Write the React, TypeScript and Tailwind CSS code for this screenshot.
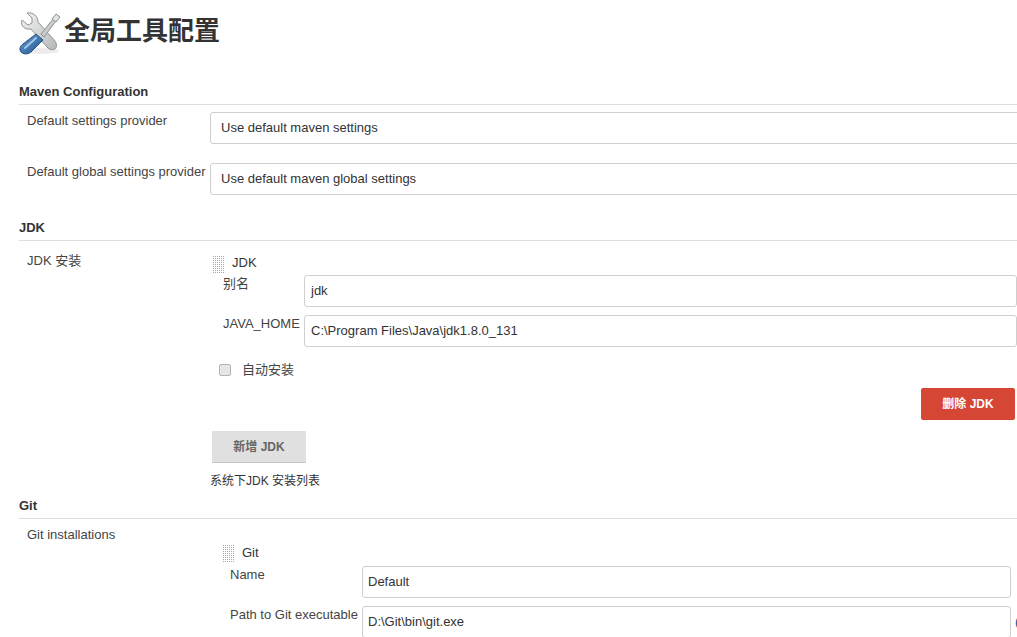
const sans = "font-['Liberation_Sans','Noto_Sans_CJK_SC',sans-serif]"

function ToolsIcon() {
  return (
    <svg width="44" height="44" viewBox="0 0 44 44" className="shrink-0">
      <defs>
        <linearGradient id="steel" x1="0" y1="0" x2="1" y2="1">
          <stop offset="0" stopColor="#f4f5f5" />
          <stop offset="1" stopColor="#b4b7b8" />
        </linearGradient>
        <linearGradient id="handle" x1="0" y1="0" x2="1" y2="1">
          <stop offset="0" stopColor="#6aa0d6" />
          <stop offset="1" stopColor="#1f5391" />
        </linearGradient>
      </defs>
      <ellipse cx="22" cy="40" rx="19" ry="3" fill="#ececec" />
      <path
        d="M4 9 L10 14 L14 12 L14 7 L9 2 C15 1 20 5 20 11 L37 30 C39 33 39 36 37 38 C35 39 32 39 30 37 L13 18 C7 19 2 15 4 9 Z"
        fill="url(#steel)"
        stroke="#8e9294"
        strokeWidth="1"
      />
      <path d="M23 23 L35 8 L38 10 L26 26 Z" fill="#c9cccd" stroke="#8e9294" strokeWidth="1" />
      <path d="M34 8 L38 3 L42 6 L38 11 Z" fill="#e1e3e4" stroke="#8e9294" strokeWidth="1" />
      <path
        d="M18 23 L25 29 L13 41 C9 44 5 43 3 41 C1 38 2 35 5 33 Z"
        fill="url(#handle)"
        stroke="#24507f"
        strokeWidth="1"
      />
      <path d="M7 37 L18 27" stroke="#a3c8ea" strokeWidth="2" strokeLinecap="round" />
    </svg>
  )
}

function DragHandle({ className }: { className: string }) {
  return (
    <svg width="11" height="17" viewBox="0 0 11 17" className={className}>
      <defs>
        <pattern id="dots" width="2" height="2" patternUnits="userSpaceOnUse">
          <rect width="1" height="1" fill="#a8a8a8" />
        </pattern>
      </defs>
      <rect width="11" height="17" fill="url(#dots)" />
    </svg>
  )
}

function Section({ title }: { title: string }) {
  return (
    <div className="border-b border-[#dfdfdf] pb-[5px] text-[13px] leading-[15px] font-bold text-[#333]">{title}</div>
  )
}

function TextBox({ value, className }: { value: string; className: string }) {
  return (
    <div
      className={`flex h-[32px] shrink-0 items-center rounded-[3px] border border-[#cfcfcf] bg-white text-[13px] text-[#333] ${className}`}
    >
      {value}
    </div>
  )
}

export default function App() {
  return (
    <div className={`relative h-[637px] w-[1017px] overflow-hidden bg-white pl-[19px] text-[13px] text-[#444] ${sans}`}>
      <header className="-ml-[1px] flex h-[60px] items-start pt-[11px]">
        <ToolsIcon />
        <h1 className="ml-[2px] text-[26px] leading-[40px] font-bold text-[#333]">全局工具配置</h1>
      </header>

      <div className="pt-[24px]">
        <Section title="Maven Configuration" />
      </div>
      <div className="mt-[7px] flex">
        <div className="w-[191px] shrink-0 pt-[1px] pl-[8px] leading-[15px]">Default settings provider</div>
        <TextBox value="Use default maven settings" className="w-[820px] pl-[10px]" />
      </div>
      <div className="mt-[19px] flex">
        <div className="w-[191px] shrink-0 pt-[1px] pl-[8px] leading-[15px] whitespace-nowrap">Default global settings provider</div>
        <TextBox value="Use default maven global settings" className="w-[820px] pl-[10px]" />
      </div>

      <div className="pt-[25px]">
        <Section title="JDK" />
      </div>
      <div className="flex">
        <div className="w-[191px] pt-[12px] pl-[8px] leading-[15px]">JDK 安装</div>
        <div className="w-[807px]">
          <div className="flex h-[34px] items-start pt-[15px] pl-[3px] text-[#333]">
            <DragHandle className="shrink-0" />
            <span className="ml-[8px] leading-[14px]">JDK</span>
          </div>
          <div className="flex">
            <div className="w-[94px] shrink-0 pt-[1px] pl-[13px] leading-[15px]">别名</div>
            <TextBox value="jdk" className="w-[713px] pl-[6px]" />
          </div>
          <div className="mt-[8px] flex">
            <div className="w-[94px] shrink-0 pt-[1px] pl-[13px] leading-[15px] whitespace-nowrap">JAVA_HOME</div>
            <TextBox value="C:\Program Files\Java\jdk1.8.0_131" className="w-[713px] pl-[6px]" />
          </div>
          <label className="mt-[15px] flex h-[15px] items-center pl-[9px]">
            <span className="h-[12px] w-[12px] rounded-[2px] border border-[#b5b5b5] bg-[#e6e6e6]" />
            <span className="ml-[11px]">自动安装</span>
          </label>
          <div className="mt-[11px] flex justify-end pr-[2px]">
            <button className="h-[32px] w-[94px] rounded-[2px] bg-[#d64635] text-[12px] font-bold text-white">删除 JDK</button>
          </div>
          <button className="mt-[11px] ml-[2px] block h-[32px] w-[94px] border-b border-[#c8c8c8] bg-[#e0e0e0] text-[12px] font-bold text-[#666]">
            新增 JDK
          </button>
          <p className="mt-[10px] text-[12px] leading-[16px] text-[#333]">系统下JDK 安装列表</p>
        </div>
      </div>

      <div className="pt-[9px]">
        <Section title="Git" />
      </div>
      <div className="flex">
        <div className="w-[191px] pt-[8px] pl-[8px] leading-[15px]">Git installations</div>
        <div className="w-[807px]">
          <div className="flex h-[47px] items-start pt-[26px] pl-[13px] text-[#333]">
            <DragHandle className="shrink-0" />
            <span className="ml-[8px] leading-[15px]">Git</span>
          </div>
          <div className="flex">
            <div className="w-[152px] shrink-0 pt-[1px] pl-[20px] leading-[15px]">Name</div>
            <TextBox value="Default" className="w-[649px] pl-[5px]" />
          </div>
          <div className="mt-[8px] flex">
            <div className="w-[152px] shrink-0 pt-[1px] pl-[20px] leading-[15px] whitespace-nowrap">Path to Git executable</div>
            <TextBox value="D:\Git\bin\git.exe" className="w-[649px] pl-[5px]" />
            <span className="ml-[4px] leading-[32px] text-[#204a87]">(</span>
          </div>
        </div>
      </div>
    </div>
  )
}
